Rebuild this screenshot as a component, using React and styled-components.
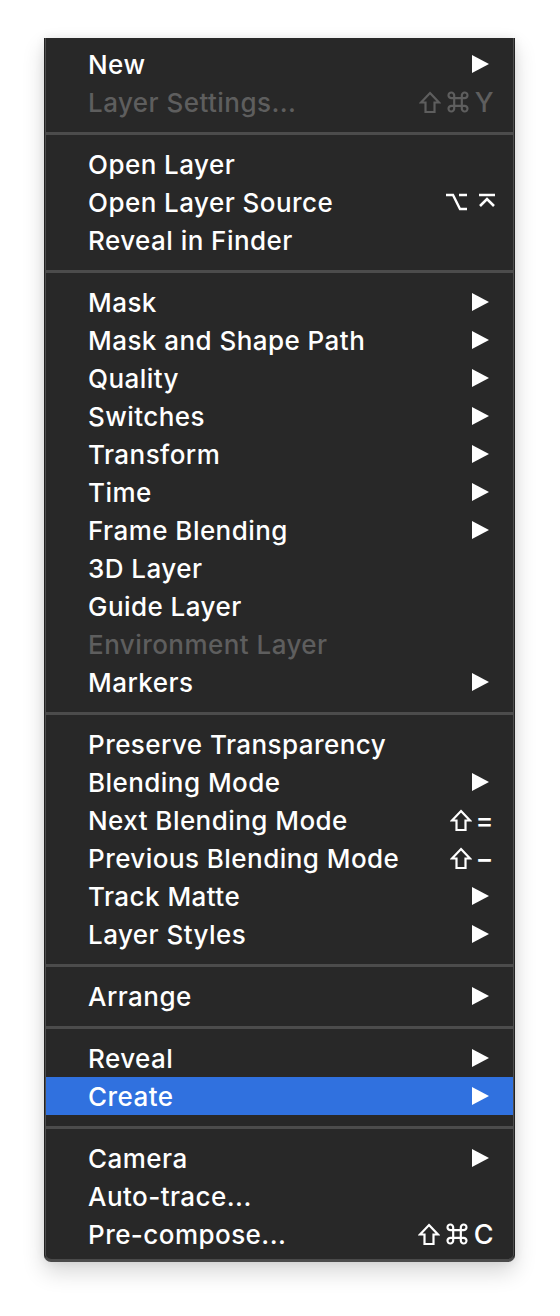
import React from "react";
import styled, { createGlobalStyle } from "styled-components";

const Global = createGlobalStyle`
  html, body { margin: 0; background: #ffffff; }
  body { font-family: "Inter", "Liberation Sans", sans-serif; }
`;

const Page = styled.div`
  padding: 38px 0 0 44px;
  height: 1316px;
  box-sizing: border-box;
`;

const Menu = styled.div`
  width: 471px;
  box-sizing: border-box;
  background: #282828;
  border: 1px solid #222;
  border-top: none;
  border-bottom: 3px solid #4a4a4a;
  box-shadow: inset 1px 0 0 #4f4f4f, inset -1px 0 0 #4f4f4f,
    0 10px 22px rgba(0, 0, 0, 0.16), 0 0 10px rgba(0, 0, 0, 0.08);
  border-radius: 0 0 7px 7px;
  padding: 7px 1px 6px;
`;

const Row = styled.div`
  height: 38px;
  display: flex;
  align-items: center;
  padding: 0 24px 0 42px;
  background: ${(p) => (p.$active ? "#3071df" : "transparent")};
  color: ${(p) => (p.$disabled ? "#5e5e5e" : "#ffffff")};
  font-size: 26px;
  font-weight: 500;
  letter-spacing: 0.45px;
`;

const Label = styled.span`
  flex: 1;
  white-space: nowrap;
`;

const Keys = styled.span`
  display: flex;
  align-items: center;
  gap: ${(p) => p.$gap || 4}px;
  margin-right: ${(p) => p.$shift || -5}px;
  font-size: 27px;
  font-weight: 500;
  color: inherit;
`;

const Separator = styled.div`
  height: 3px;
  background: #4c4c4c;
  margin: 11px 0 10px;
`;

const Arrow = () => (
  <svg width="17" height="18" viewBox="0 0 17 18">
    <polygon points="0,0 17,9 0,18" fill="currentColor" />
  </svg>
);

const Shift = () => (
  <svg width="22" height="23" viewBox="0 0 22 23">
    <path d="M11 2 L20 11.5 H15.5 V21 H6.5 V11.5 H2 Z" fill="none" stroke="currentColor" strokeWidth="2.2" strokeLinejoin="miter" />
  </svg>
);

const Cmd = () => (
  <svg width="26" height="24" viewBox="0 0 22 22">
    <path
      d="M7.5 7.5 V5 A2.6 2.6 0 1 0 5 7.5 H17 A2.6 2.6 0 1 0 14.5 5 V17 A2.6 2.6 0 1 0 17 14.5 H5 A2.6 2.6 0 1 0 7.5 17 Z"
      fill="none"
      stroke="currentColor"
      strokeWidth="2"
    />
  </svg>
);

const Opt = () => (
  <svg width="24" height="20" viewBox="0 0 24 20">
    <path d="M1 3 H8 L15 17 H22 M14 3 H22" fill="none" stroke="currentColor" strokeWidth="2.4" />
  </svg>
);

const Enter = () => (
  <svg width="20" height="20" viewBox="0 0 20 20">
    <path d="M2 3 H18 M3 14 L10 7 L17 14" fill="none" stroke="currentColor" strokeWidth="2.6" />
  </svg>
);

const sections = [
  [
    { label: "New", sub: true },
    { label: "Layer Settings...", disabled: true, keys: [<Shift key="s" />, <Cmd key="c" />, "Y"] },
  ],
  [
    { label: "Open Layer" },
    { label: "Open Layer Source", gap: 8, shift: -8, keys: [<Opt key="o" />, <Enter key="e" />] },
    { label: "Reveal in Finder" },
  ],
  [
    { label: "Mask", sub: true },
    { label: "Mask and Shape Path", sub: true },
    { label: "Quality", sub: true },
    { label: "Switches", sub: true },
    { label: "Transform", sub: true },
    { label: "Time", sub: true },
    { label: "Frame Blending", sub: true },
    { label: "3D Layer" },
    { label: "Guide Layer" },
    { label: "Environment Layer", disabled: true },
    { label: "Markers", sub: true },
  ],
  [
    { label: "Preserve Transparency" },
    { label: "Blending Mode", sub: true },
    { label: "Next Blending Mode", keys: [<Shift key="s" />, "="] },
    { label: "Previous Blending Mode", keys: [<Shift key="s" />, "\u2212"] },
    { label: "Track Matte", sub: true },
    { label: "Layer Styles", sub: true },
  ],
  [{ label: "Arrange", sub: true }],
  [
    { label: "Reveal", sub: true },
    { label: "Create", sub: true, active: true },
  ],
  [
    { label: "Camera", sub: true },
    { label: "Auto-trace..." },
    { label: "Pre-compose...", keys: [<Shift key="s" />, <Cmd key="c" />, "C"] },
  ],
];

export default function App() {
  return (
    <Page>
      <Global />
      <Menu>
        {sections.map((items, i) => (
          <React.Fragment key={i}>
            {i > 0 && <Separator />}
            {items.map((it) => (
              <Row key={it.label} $active={it.active} $disabled={it.disabled}>
                <Label>{it.label}</Label>
                {it.sub && <Arrow />}
                {it.keys && (
                  <Keys $gap={it.gap} $shift={it.shift}>
                    {it.keys}
                  </Keys>
                )}
              </Row>
            ))}
          </React.Fragment>
        ))}
      </Menu>
    </Page>
  );
}
